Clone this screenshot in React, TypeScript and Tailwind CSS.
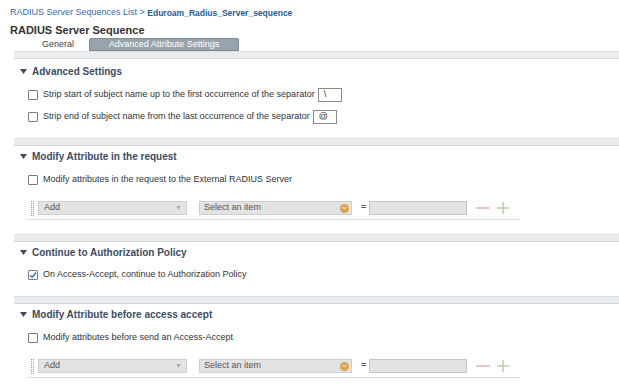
import React from "react";

const font = { fontFamily: '"Liberation Sans", Arial, sans-serif' };

function Band() {
  return <div className="ml-[14px] h-[8px] border-t border-t-[#e0e0e0] border-b border-b-[#cfd9de] bg-[#eaedef]" />;
}

function Header({ title }: { title: string }) {
  return (
    <div className="flex h-[20px] items-center pl-[20px]">
      <svg width="7" height="5" viewBox="0 0 7 5" className="mr-[5px]">
        <path d="M0 0 L7 0 L3.5 5 Z" fill="#3d4d5f" />
      </svg>
      <span className="text-[10px] font-bold text-[#3d4d5f]">{title}</span>
    </div>
  );
}

function Checkbox({ checked }: { checked?: boolean }) {
  return (
    <span className="mr-[5px] flex h-[10px] w-[10px] items-center justify-center rounded-[1px] border border-[#7a7a7a] bg-white">
      {checked && (
        <svg width="8" height="8" viewBox="0 0 8 8">
          <path d="M1 4.2 L3.1 6.3 L7 1.5" stroke="#3a6fb0" strokeWidth="1.4" fill="none" />
        </svg>
      )}
    </span>
  );
}

function CheckRow({ label, checked, children }: { label: string; checked?: boolean; children?: React.ReactNode }) {
  return (
    <div className="flex h-[22px] items-center pl-[28px] text-[9px] text-[#333]">
      <Checkbox checked={checked} />
      <span>{label}</span>
      {children}
    </div>
  );
}

function AttrRow() {
  return (
    <div className="ml-[27px] mr-[99px] flex h-[23px] items-center border-b border-b-[#dedede] text-[9px] text-[#555]">
      <div className="ml-[4px] flex h-[15px] w-[4px] gap-[1px]">
        <div className="h-full w-[1px] border-l border-dotted border-l-[#999]" />
        <div className="h-full w-[1px] border-l border-dotted border-l-[#999]" />
      </div>
      <div className="ml-[3px] flex h-[14px] w-[149px] items-center justify-between border border-[#cfcfcf] bg-[#e3e3e3] pl-[5px] pr-[4px]">
        <span>Add</span>
        <span className="text-[7px] text-[#aaa]">▼</span>
      </div>
      <div className="ml-[12px] flex h-[14px] w-[153px] items-center justify-between border border-[#cfcfcf] bg-[#e3e3e3] pl-[4px] pr-[2px]">
        <span>Select an item</span>
        <span className="flex h-[9px] w-[9px] items-center justify-center rounded-full bg-[#e0a24a]">
          <svg width="5" height="4" viewBox="0 0 5 4">
            <path d="M0.5 1 L2.5 3 L4.5 1" stroke="#fff" strokeWidth="1" fill="none" />
          </svg>
        </span>
      </div>
      <span className="ml-[9px] font-bold text-[#555]">=</span>
      <div className="ml-[3px] h-[14px] w-[98px] border border-[#c4c4c4] bg-[#e3e3e3]" />
      <svg width="14" height="14" viewBox="0 0 14 14" className="ml-[9px]">
        <rect x="0" y="6.2" width="14" height="1.6" fill="#e8bab4" />
      </svg>
      <svg width="12" height="12" viewBox="0 0 12 12" className="ml-[7px]">
        <rect x="0" y="5.2" width="12" height="1.6" fill="#b9d4ad" />
        <rect x="5.2" y="0" width="1.6" height="12" fill="#b9d4ad" />
      </svg>
    </div>
  );
}

function SepInput({ value, ml }: { value: string; ml: string }) {
  return (
    <div className={`${ml} flex h-[14px] w-[24px] items-center border border-[#8a8a8a] bg-white pl-[5px] text-[9px] text-[#333]`}>
      {value}
    </div>
  );
}

export default function App() {
  return (
    <div className="h-[389px] w-[619px] overflow-hidden bg-white" style={font}>
      <div className="mt-[6px] flex h-[14px] items-center pl-[10px] text-[9px] text-[#2e6da8]">
        <span>RADIUS Server Sequences List &gt;&nbsp;</span>
        <span className="text-[8.5px] font-bold text-[#1f5d98]">Eduroam_Radius_Server_sequence</span>
      </div>
      <div className="mt-[3px] flex h-[14px] items-center pl-[10px] text-[11px] font-bold text-[#333]">
        RADIUS Server Sequence
      </div>
      <div className="flex h-[14px] items-end text-[9px]">
        <div className="flex h-[13px] w-[89px] items-center pl-[42px] text-[#444]">General</div>
        <div className="flex h-[13px] w-[150px] items-center justify-center rounded-t-[2px] border border-[#7f8d95] bg-[#98a4ab] text-white">
          Advanced Attribute Settings
        </div>
      </div>

      <Band />
      <div className="pt-[2px]">
        <Header title="Advanced Settings" />
      </div>
      <div className="mt-[3px]">
        <CheckRow label="Strip start of subject name up to the first occurrence of the separator">
          <SepInput value="\" ml="ml-[3px]" />
        </CheckRow>
        <CheckRow label="Strip end of subject name from the last occurrence of the separator">
          <SepInput value="@" ml="ml-[3px]" />
        </CheckRow>
      </div>

      <div className="mt-[10px]">
        <Band />
      </div>
      <Header title="Modify Attribute in the request" />
      <div className="mt-[3px]">
        <CheckRow label="Modify attributes in the request to the External RADIUS Server" />
      </div>
      <div className="mt-[6px]">
        <AttrRow />
      </div>

      <div className="mt-[14px]">
        <Band />
      </div>
      <Header title="Continue to Authorization Policy" />
      <div className="mt-[2px]">
        <CheckRow label="On Access-Accept, continue to Authorization Policy" checked />
      </div>

      <div className="mt-[10px]">
        <Band />
      </div>
      <Header title="Modify Attribute before access accept" />
      <div className="mt-[3px]">
        <CheckRow label="Modify attributes before send an Access-Accept" />
      </div>
      <div className="mt-[6px]">
        <AttrRow />
      </div>
    </div>
  );
}
